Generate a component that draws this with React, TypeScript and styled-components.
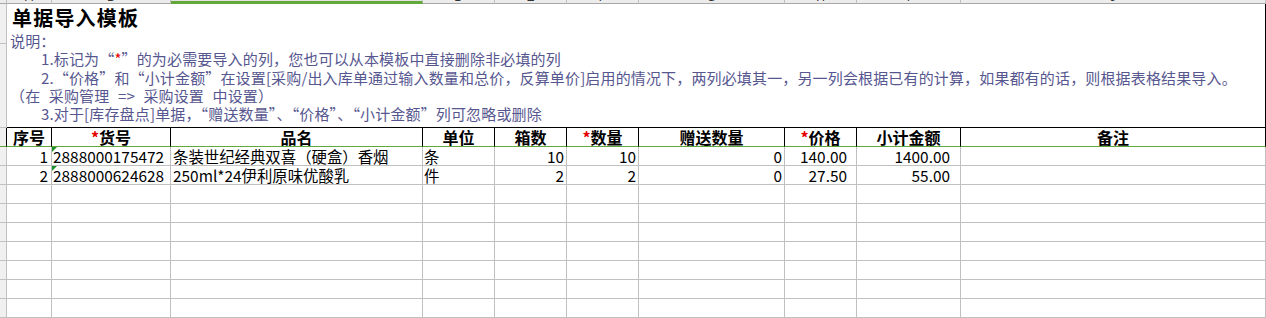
import React from "react";
import styled, { createGlobalStyle, css } from "styled-components";

// sheet geometry (px, border included)
const COLS = [45, 119, 252, 72, 72, 72, 146, 72, 104, 305];
const LETTERS = ["A", "B", "C", "D", "E", "F", "G", "H", "I", "J"];
const GRID = "#c0c0c0";
const GREEN = "#62a83a";

type Align = "left" | "right" | "center";

interface Column {
  title: string;
  required?: boolean;
  align: Align;
  pad: number;
}

const columns: Column[] = [
  { title: "序号", align: "right", pad: 3 },
  { title: "货号", required: true, align: "left", pad: 1 },
  { title: "品名", align: "left", pad: 2 },
  { title: "单位", align: "left", pad: 1 },
  { title: "箱数", align: "right", pad: 2 },
  { title: "数量", required: true, align: "right", pad: 2 },
  { title: "赠送数量", align: "right", pad: 2 },
  { title: "价格", required: true, align: "right", pad: 9 },
  { title: "小计金额", align: "right", pad: 10 },
  { title: "备注", align: "left", pad: 2 },
];

const rows: string[][] = [
  ["1", "2888000175472", "条装世纪经典双喜（硬盒）香烟", "条", "10", "10", "0", "140.00", "1400.00", ""],
  ["2", "2888000624628", "250ml*24伊利原味优酸乳", "件", "2", "2", "0", "27.50", "55.00", ""],
];
const EMPTY_ROWS = 7;

const GlobalStyle = createGlobalStyle`
  html, body {
    margin: 0;
    padding: 0;
    background: #fff;
    overflow: hidden;
  }
  body {
    font-family: "Noto Sans CJK SC", "Liberation Sans", sans-serif;
  }
`;

const Sheet = styled.div`
  display: grid;
  grid-template-columns: 7px ${COLS.map((w) => `${w}px`).join(" ")};
  grid-template-rows: 4px 40px 84px 19px repeat(${rows.length + EMPTY_ROWS}, 19px);
  width: 1266px;
`;

const Corner = styled.div`
  box-sizing: border-box;
  background: #ececec;
  border-right: 1px solid ${GRID};
  border-bottom: 1px solid #a8a8a8;
`;

const ColHead = styled.div<{ $active?: boolean }>`
  box-sizing: border-box;
  display: flex;
  align-items: flex-end;
  justify-content: center;
  overflow: hidden;
  background: ${(p) => (p.$active ? "#e2e2e2" : "#ececec")};
  border-right: 1px solid ${GRID};
  border-bottom: 1px solid #a8a8a8;
  font: 12px/12px "Liberation Sans", sans-serif;
  color: #333;
  ${(p) =>
    p.$active &&
    css`
      border-bottom: 3px solid ${GREEN};
    `}
`;

const RowHead = styled.div<{ $dark?: boolean; $green?: boolean }>`
  box-sizing: border-box;
  background: #f0f0f0;
  border-right: 1px solid ${(p) => (p.$dark ? "#000" : GRID)};
  border-bottom: 1px solid ${(p) => (p.$green ? GREEN : GRID)};
`;

const TitleCell = styled.div`
  grid-column: 2 / -1;
  grid-row: 2 / 4;
  box-sizing: border-box;
  padding-left: 3px;
  border-right: 1px solid #000;
  border-bottom: 1px solid #000;
`;

const Title = styled.h1`
  margin: 0;
  padding-left: 2px;
  font-size: 20px;
  line-height: 28px;
  font-weight: 700;
  letter-spacing: 1.2px;
  color: #000;
`;

const NoteLine = styled.div<{ $indent?: boolean }>`
  padding-left: ${(p) => (p.$indent ? 31 : 0)}px;
  font-size: 15px;
  line-height: 18.3px;
  letter-spacing: 0.15px;
  word-spacing: 5px;
  color: #575790;
  white-space: pre;
`;

const Star = styled.span`
  color: #e60000;
`;

const HeadCell = styled.div`
  box-sizing: border-box;
  overflow: hidden;
  white-space: nowrap;
  border-right: 1px solid #000;
  border-bottom: 1px solid ${GREEN};
  font-size: 16px;
  line-height: 18px;
  font-weight: 700;
  text-align: center;
  color: #000;
`;

const Cell = styled.div<{ $align: Align; $pad: number; $flag?: boolean }>`
  position: relative;
  box-sizing: border-box;
  overflow: hidden;
  white-space: nowrap;
  border-right: 1px solid ${GRID};
  border-bottom: 1px solid ${GRID};
  padding: ${(p) => (p.$align === "right" ? `0 ${p.$pad}px 0 1px` : `0 1px 0 ${p.$pad}px`)};
  font-size: 15.4px;
  line-height: 18px;
  text-align: ${(p) => p.$align};
  color: #000;
  ${(p) =>
    p.$flag &&
    css`
      &::before {
        content: "";
        position: absolute;
        left: 0;
        top: 0;
        border-top: 5px solid #1f8f2a;
        border-right: 5px solid transparent;
      }
    `}
`;

const notes = [
  <NoteLine key="h">说明：</NoteLine>,
  <NoteLine key="1" $indent>
    {"1.标记为“"}
    <Star>*</Star>
    {"”的为必需要导入的列，您也可以从本模板中直接删除非必填的列"}
  </NoteLine>,
  <NoteLine key="2" $indent>
    {"2.“价格”和“小计金额”在设置[采购/出入库单通过输入数量和总价，反算单价]启用的情况下，两列必填其一，另一列会根据已有的计算，如果都有的话，则根据表格结果导入。"}
  </NoteLine>,
  <NoteLine key="3">{"（在 采购管理 => 采购设置 中设置）"}</NoteLine>,
  <NoteLine key="4" $indent>
    {"3.对于[库存盘点]单据，“赠送数量”、“价格”、“小计金额”列可忽略或删除"}
  </NoteLine>,
];

const App: React.FC = () => {
  const allRows = [...rows, ...Array.from({ length: EMPTY_ROWS }, () => columns.map(() => ""))];

  return (
    <>
      <GlobalStyle />
      <Sheet>
        <Corner />
        {LETTERS.map((letter, i) => (
          <ColHead key={letter} $active={i === 2}>
            {letter}
          </ColHead>
        ))}

        <RowHead />
        <RowHead />
        <TitleCell>
          <Title>单据导入模板</Title>
          {notes}
        </TitleCell>

        <RowHead $dark $green />
        {columns.map((col) => (
          <HeadCell key={col.title}>
            {col.required && <Star>*</Star>}
            {col.title}
          </HeadCell>
        ))}

        {allRows.map((row, r) => (
          <React.Fragment key={r}>
            <RowHead />
            {row.map((value, c) => (
              <Cell
                key={c}
                $align={columns[c].align}
                $pad={columns[c].pad}
                $flag={c === 1 && value !== ""}
              >
                {value}
              </Cell>
            ))}
          </React.Fragment>
        ))}
      </Sheet>
    </>
  );
};

export default App;
